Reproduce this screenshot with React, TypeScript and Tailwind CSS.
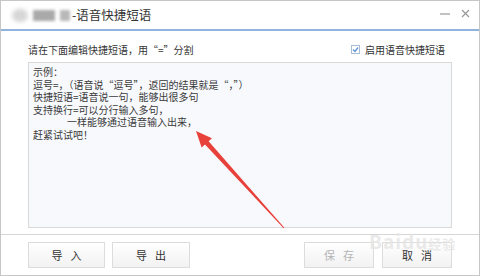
const lines = [
    { t: "示例：", indent: false },
    { t: "逗号=，（语音说“逗号”，返回的结果就是“，”）", indent: false },
    { t: "快捷短语=语音说一句，能够出很多句", indent: false },
    { t: "支持换行=可以分行输入多句，", indent: false },
    { t: "一样能够通过语音输入出来，", indent: true },
    { t: "赶紧试试吧！", indent: false },
];

const Btn = ({ a, b, w, off }: { a: string; b: string; w: string; off?: boolean }) => (
    <div
        className={`flex h-[26px] ${w} items-center justify-center gap-[8px] border border-[#dcdcdc] bg-gradient-to-b from-white to-[#f2f2f2] text-[11px] ${
            off ? "text-[#b4b4b4]" : "text-[#333]"
        }`}
    >
        <span>{a}</span>
        <span>{b}</span>
    </div>
);

export default function App() {
    return (
        <div className="relative h-[276px] w-[480px] overflow-hidden border border-[#c6c6c6] bg-white font-['Noto_Sans_CJK_SC','Liberation_Sans',sans-serif] text-[#333]">
            {/* title bar */}
            <div className="flex h-[30px] items-center justify-between border-b-2 border-[#8fb5de] pl-[11px] pr-[9px]">
                <div className="flex items-center">
                    <div className="flex items-center gap-[5px]">
                        <div className="h-[13px] w-[16px] rounded-full bg-[#d6d6d6] blur-[2px]" />
                        <div className="h-[11px] w-[22px] bg-[#a9a9a9] blur-[1.5px]" />
                        <div className="h-[11px] w-[10px] bg-[#b8b8b8] blur-[1.5px]" />
                    </div>
                    <span className="ml-[2px] text-[12.5px] text-[#333]">-语音快捷短语</span>
                </div>
                <div className="flex items-center gap-[11px] pb-[3px]">
                    <svg width="10" height="10" viewBox="0 0 10 10">
                        <line x1="0" y1="5" x2="10" y2="5" stroke="#9a9a9a" strokeWidth="1.2" />
                    </svg>
                    <svg width="9" height="9" viewBox="0 0 9 9">
                        <path d="M1 1L8 8M8 1L1 8" stroke="#9a9a9a" strokeWidth="1.2" />
                    </svg>
                </div>
            </div>

            <div className="px-[27px]">
                <div className="flex h-[31px] items-center justify-between pr-[7px] pt-[5px] text-[10px]">
                    <span>请在下面编辑快捷短语，用“=”分割</span>
                    <div className="flex items-center gap-[5px]">
                        <span className="flex h-[9px] w-[9px] items-center justify-center border border-[#a9bdd6] bg-white">
                            <svg width="7" height="7" viewBox="0 0 7 7">
                                <path d="M1 3.5L3 5.5L6 1.5" stroke="#5f93d6" strokeWidth="1.3" fill="none" />
                            </svg>
                        </span>
                        <span>启用语音快捷短语</span>
                    </div>
                </div>

                <div className="h-[166px] border border-[#dadada] bg-[#f8f9fd] pl-[4px] pt-[3px] text-[10px] leading-[12.6px] text-[#3a3a3a]">
                    {lines.map((l) => (
                        <div key={l.t} className={l.indent ? "pl-[34px]" : ""}>
                            {l.t}
                        </div>
                    ))}
                </div>
            </div>

            <div className="mt-[6px] border-t border-[#d6d6d6]" />

            <div className="flex justify-between px-[27px] pt-[7px]">
                <div className="flex gap-[7px]">
                    <Btn a="导" b="入" w="w-[77px]" />
                    <Btn a="导" b="出" w="w-[78px]" />
                </div>
                <div className="flex gap-[8px]">
                    <Btn a="保" b="存" w="w-[70px]" off />
                    <Btn a="取" b="消" w="w-[70px]" />
                </div>
            </div>

            {/* watermark */}
            <div className="pointer-events-none absolute left-[368px] top-[226px] text-[19px] font-bold tracking-[1px] text-[#e4e4e4]/80">
                Baidu<span className="text-[13px]">经验</span>
            </div>

            {/* red arrow */}
            <svg className="pointer-events-none absolute left-0 top-0" width="480" height="276" viewBox="0 0 480 276">
                <polygon
                    points="283.4,226.7 207.6,140.2 211,137.2 195,130 200.6,146.6 204,143.6 282.6,227.3"
                    fill="#e8403a"
                />
            </svg>
        </div>
    );
}
